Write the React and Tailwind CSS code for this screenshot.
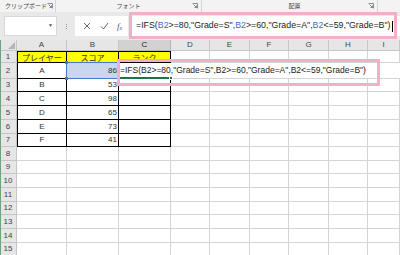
import React from 'react';

const cols = ['A', 'B', 'C', 'D', 'E', 'F', 'G', 'H', 'I'];
const widths = [17, 50, 52, 52, 39, 40, 39, 40, 39, 32];
const rowHeights = [12, 16, 13, 14, 14, 14, 13, 14, 13, 14, 14, 13, 14, 14, 13];

const data = [
  ['A', 86],
  ['B', 53],
  ['C', 98],
  ['D', 65],
  ['E', 73],
  ['F', 41],
];

const jp = { fontFamily: '"Noto Sans CJK JP", "Noto Sans", sans-serif' };
const ui = { fontFamily: '"Liberation Sans", Arial, "Noto Sans CJK JP", sans-serif' };

function Launcher() {
  return (
    <svg width="6" height="6" viewBox="0 0 6 6" className="text-gray-500">
      <path d="M0.5 0.5h5v5" fill="none" stroke="currentColor" strokeWidth="0.8" />
      <path d="M1.5 1.5l3 3M2.5 4.5h2v-2" fill="none" stroke="currentColor" strokeWidth="0.8" />
    </svg>
  );
}

function Ribbon() {
  return (
    <div className="flex h-[12px] bg-[#f3f3f3] text-[6px] leading-[12px] text-[#444] whitespace-nowrap" style={jp}>
      <div className="relative flex w-[56px] shrink-0 items-center border-r border-[#d6d6d6] pl-[5px]">
        <span>クリップボード</span>
        <span className="absolute right-[2px] top-[3px]"><Launcher /></span>
      </div>
      <div className="relative flex w-[146px] shrink-0 items-center justify-center border-r border-[#d6d6d6]">
        <span>フォント</span>
        <span className="absolute right-[3px] top-[3px]"><Launcher /></span>
      </div>
      <div className="relative flex w-[176px] shrink-0 items-center justify-center border-r border-[#d6d6d6]">
        <span className="pl-[10px]">配置</span>
        <span className="absolute right-[3px] top-[3px]"><Launcher /></span>
      </div>
      <div className="flex-1" />
    </div>
  );
}

function Formula({ refColor }) {
  return (
    <>
      =IFS(<span style={{ color: refColor }}>B2</span>&gt;=80,"Grade=S",
      <span style={{ color: refColor }}>B2</span>&gt;=60,"Grade=A",
      <span style={{ color: refColor }}>B2</span>&lt;=59,"Grade=B")
    </>
  );
}

function FormulaBar() {
  return (
    <div className="flex h-[28px] items-center bg-[#e9e9e9] pl-[4px]">
      <div className="relative h-[20px] w-[53px] shrink-0 bg-white border border-[#d8d8d8]">
        <span className="absolute right-[3px] top-[6px] text-[5px] leading-none text-[#555]">▼</span>
      </div>
      <div className="flex w-[18px] shrink-0 flex-col items-center gap-[1px]">
        <span className="h-[1px] w-[1px] bg-[#999]" />
        <span className="h-[1px] w-[1px] bg-[#999]" />
        <span className="h-[1px] w-[1px] bg-[#999]" />
      </div>
      <div className="flex h-[20px] w-[53px] shrink-0 items-center bg-white text-[#555]">
        <svg width="8" height="8" viewBox="0 0 8 8" className="ml-[8px]">
          <path d="M1 1l6 6M7 1l-6 6" stroke="currentColor" strokeWidth="0.9" />
        </svg>
        <svg width="9" height="8" viewBox="0 0 9 8" className="ml-[9px]">
          <path d="M1 4.5l2.5 2.5L8 1" fill="none" stroke="currentColor" strokeWidth="0.9" />
        </svg>
        <span className="ml-[8px] text-[9px] italic leading-none" style={{ fontFamily: '"Liberation Serif", serif' }}>
          f<sub className="text-[6px]">x</sub>
        </span>
      </div>
      <div className="ml-[4px] flex h-[20px] min-w-0 flex-1 items-center bg-white pl-[4px] text-[8.8px] text-[#222]" style={ui}>
        <span className="whitespace-nowrap">
          <Formula refColor="#3b6fc6" />
        </span>
        <span className="ml-[1px] h-[11px] w-[1px] shrink-0 bg-black" />
      </div>
    </div>
  );
}

function Grid() {
  const template = widths.map((w) => `${w}px`).join(' ');
  const rows = rowHeights.map((_, i) => i + 1);

  return (
    <div className="relative" style={{ display: 'grid', gridTemplateColumns: template }}>
      <div className="relative h-[11px] bg-[#e6e6e6] border-r border-b border-[#c6c6c6]">
        <svg width="7" height="7" viewBox="0 0 8 8" className="absolute right-[1px] bottom-[1px]">
          <path d="M8 0V8H0Z" fill="#b4b4b4" />
        </svg>
      </div>
      {cols.map((c) => (
        <div
          key={c}
          className={`flex h-[11px] items-center justify-center border-r border-b text-[8px] ${c === 'C' ? 'bg-[#d2d2d2] border-[#b8b8b8] text-[#222]' : 'bg-[#e6e6e6] border-[#c6c6c6] text-[#444]'}`}
          style={ui}
        >
          {c}
        </div>
      ))}

      {rows.map((r, ri) => {
        const h = rowHeights[ri];
        const cells = [];
        cells.push(
          <div
            key={`h${r}`}
            className="flex items-center justify-center bg-[#e6e6e6] border-r border-b border-[#c6c6c6] text-[8px] text-[#444]"
            style={{ ...ui, height: h }}
          >
            {r}
          </div>
        );
        if (r === 1) {
          ['プレイヤー', 'スコア', 'ランク'].forEach((t, i) =>
            cells.push(
              <div
                key={`1${i}`}
                className={`flex items-center justify-center bg-[#ffff00] border-t border-b border-r border-black pt-[1px] text-[8px] text-[#333] ${i === 0 ? 'border-l' : ''}`}
                style={{ ...jp, height: h }}
              >
                {t}
              </div>
            )
          );
        } else if (r <= 7) {
          const [name, score] = data[r - 2];
          cells.push(
            <div key={`a${r}`} className="flex items-center justify-center border-b border-r border-l border-black text-[8px] text-[#333]" style={{ ...ui, height: h }}>
              {name}
            </div>
          );
          if (r === 2) {
            cells.push(
              <div key="b2" className="relative flex items-center justify-end bg-[#c8d7ee] border-b border-r border-black pr-[1px] text-[8px] text-[#333]" style={{ ...ui, height: h }}>
                <span className="absolute inset-[-1px] border border-[#4a78c2]" />
                <span className="absolute left-[-2px] top-[-2px] h-[3px] w-[3px] bg-[#4a78c2]" />
                <span className="absolute left-[-2px] bottom-[-2px] h-[3px] w-[3px] bg-[#4a78c2]" />
                <span className="absolute right-[-2px] top-[-2px] h-[3px] w-[3px] bg-[#4a78c2]" />
                <span className="absolute right-[-2px] bottom-[-2px] h-[3px] w-[3px] bg-[#4a78c2]" />
                <span className="relative">86</span>
              </div>
            );
            cells.push(
              <div key="c2" className="relative col-span-6 flex items-center bg-white border-b border-[#d4d4d4] pl-[1px] text-[8.5px] text-[#222]" style={{ ...ui, height: h }}>
                <span className="absolute left-0 bottom-[-1px] h-[2px] w-[52px] bg-[#217346]" />
                <span className="absolute left-[50px] bottom-[-2px] h-[4px] w-[4px] bg-[#217346] border border-white" />
                <span className="relative whitespace-nowrap">
                  <Formula refColor="#222" />
                </span>
              </div>
            );
            cells.push(<div key="i2" className="border-b border-[#d4d4d4]" style={{ height: h }} />);
            return cells;
          }
          cells.push(
            <div key={`b${r}`} className="flex items-center justify-end border-b border-r border-black pr-[1px] text-[8px] text-[#333]" style={{ ...ui, height: h }}>
              {score}
            </div>
          );
          cells.push(<div key={`c${r}`} className="border-b border-r border-black" style={{ height: h }} />);
        } else {
          for (let i = 0; i < 3; i++) {
            cells.push(<div key={`x${r}${i}`} className="border-b border-r border-[#d4d4d4]" style={{ height: h }} />);
          }
        }
        for (let i = 3; i < 9; i++) {
          cells.push(<div key={`g${r}${i}`} className="border-b border-r border-[#d4d4d4]" style={{ height: h }} />);
        }
        return cells;
      })}

      <div className="pointer-events-none absolute left-[117px] top-[19px] h-[27px] w-[263px] border-[3px] border-[#f2afc8]" />
    </div>
  );
}

export default function App() {
  return (
    <div className="relative h-[255px] w-[400px] overflow-hidden bg-white">
      <Ribbon />
      <FormulaBar />
      <Grid />
      <div className="pointer-events-none absolute left-[129px] top-[12px] h-[27px] w-[268px] border-[3px] border-[#f2afc8]" />
      <div className="pointer-events-none absolute left-0 top-[40px] h-[215px] w-[1px] bg-[#6fa37e]" />
    </div>
  );
}
